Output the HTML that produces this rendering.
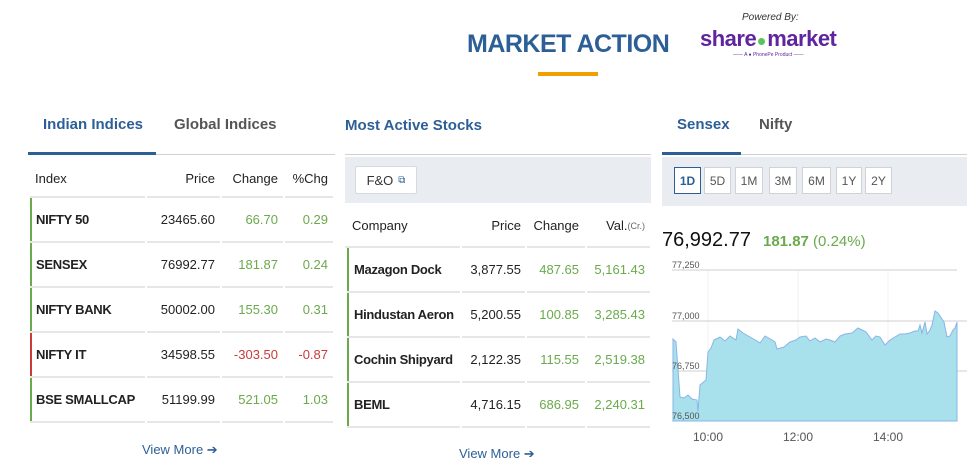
<!DOCTYPE html>
<html><head><meta charset="utf-8"><style>
*{margin:0;padding:0;box-sizing:border-box}
body{width:967px;height:475px;background:#fff;font-family:"Liberation Sans",Arial,sans-serif;position:relative;overflow:hidden;color:#222}
.a{position:absolute;white-space:nowrap}
.tab{font-size:15px;color:#555;font-weight:bold}
.tab.on{color:#2d5f97}
.line{position:absolute;height:1px;background:#d0d0d0}
.blue{position:absolute;height:3px;background:#2d5f97}
.cell{position:absolute;border-bottom:2px solid #e6e6e6;font-size:13px;display:flex;align-items:center}
.r{justify-content:flex-end}
.g{color:#6aaa4c}.red{color:#c83c3c}
.nm{font-weight:bold;color:#222;letter-spacing:-0.3px}
.bar{position:absolute;width:2px;background:#6aaa4c}
.btn{position:absolute;top:167px;height:27px;border:1px solid #cfd3d8;background:#fff;font-size:12px;color:#555;display:flex;align-items:center;justify-content:center}
.vm{font-size:13px;color:#2d5f97}
</style></head><body>

<div class="a" style="left:467px;top:30px;font-size:25px;font-weight:bold;color:#2d5f97;letter-spacing:-0.5px">MARKET ACTION</div>
<div class="a" style="left:538px;top:72px;width:60px;height:4px;background:#f0a000"></div>
<div class="a" style="left:742px;top:12px;font-size:10px;font-style:italic;color:#333">Powered By:</div>
<div class="a" style="left:700px;top:26px;font-size:22px;font-weight:bold;color:#5f259f;letter-spacing:-0.5px">share<span style="display:inline-block;width:7px;height:7px;border-radius:50%;background:#5cc25a;margin:0 2px 1px 2px"></span>market</div>
<div class="a" style="left:733px;top:52px;font-size:5px;color:#5f259f">—— A ● PhonePe Product ——</div>

<!-- LEFT -->
<div class="a tab on" style="left:43px;top:116px">Indian Indices</div>
<div class="a tab" style="left:174px;top:116px">Global Indices</div>
<div class="line" style="left:28px;top:154px;width:307px"></div>
<div class="blue" style="left:28px;top:152px;width:128px"></div>

<div class="cell" style="left:30px;top:160px;width:115px;height:38px;padding-left:5px">Index</div>
<div class="cell r" style="left:147px;top:160px;width:73px;height:38px;padding-right:5px">Price</div>
<div class="cell r" style="left:222px;top:160px;width:61px;height:38px;padding-right:5px">Change</div>
<div class="cell r" style="left:285px;top:160px;width:48px;height:38px;padding-right:5px">%Chg</div>

<div id="L"></div>
<div class="a vm" style="left:142px;top:442px">View More ➔</div>

<!-- MIDDLE -->
<div class="a" style="left:345px;top:117px;font-size:15px;font-weight:bold;color:#2d5f97">Most Active Stocks</div>
<div class="line" style="left:345px;top:154px;width:306px"></div>
<div class="a" style="left:345px;top:157px;width:306px;height:46px;background:#e9edf1"></div>
<div class="a" style="left:355px;top:166px;width:62px;height:28px;background:#fff;border:1px solid #d6d9dd;border-radius:2px;font-size:13px;color:#333;display:flex;align-items:center;justify-content:center">F&amp;O <span style="font-size:10px;margin-left:5px;color:#2d5f97">⧉</span></div>

<div class="cell" style="left:345px;top:205px;width:115px;height:43px;padding-left:7px">Company</div>
<div class="cell r" style="left:462px;top:205px;width:63px;height:43px;padding-right:4px">Price</div>
<div class="cell r" style="left:527px;top:205px;width:58px;height:43px;padding-right:6px">Change</div>
<div class="cell r" style="left:587px;top:205px;width:63px;height:43px;padding-right:5px">Val.<span style="font-size:9px;color:#666">(Cr.)</span></div>

<div id="M"></div>
<div class="a vm" style="left:459px;top:446px">View More ➔</div>

<!-- RIGHT -->
<div class="a tab on" style="left:677px;top:116px">Sensex</div>
<div class="a tab" style="left:759px;top:116px">Nifty</div>
<div class="line" style="left:662px;top:154px;width:305px"></div>
<div class="blue" style="left:662px;top:152px;width:79px"></div>
<div class="a" style="left:662px;top:157px;width:305px;height:49px;background:#e9edf1"></div>
<div class="btn" style="left:674px;width:27px;border-color:#2d5f97;color:#2d5f97;font-weight:bold">1D</div>
<div class="btn" style="left:704px;width:27px">5D</div>
<div class="btn" style="left:735px;width:28px">1M</div>
<div class="btn" style="left:769px;width:28px">3M</div>
<div class="btn" style="left:802px;width:29px">6M</div>
<div class="btn" style="left:836px;width:26px">1Y</div>
<div class="btn" style="left:865px;width:27px">2Y</div>

<div class="a" style="left:662px;top:229px;font-size:20px;color:#111">76,992.77</div>
<div class="a" style="left:763px;top:233px;font-size:15px;color:#6aaa4c"><b>181.87</b> (0.24%)</div>

<svg class="a" style="left:660px;top:255px" width="307" height="200" viewBox="660 255 307 200">
<g stroke="#f2f2f2" stroke-width="1"><line x1="708" y1="270" x2="708" y2="421"/><line x1="798" y1="270" x2="798" y2="421"/><line x1="888" y1="270" x2="888" y2="421"/></g>
<g stroke="#cfcfcf" stroke-width="1"><line x1="672" y1="270" x2="957" y2="270"/><line x1="672" y1="321" x2="967" y2="321"/><line x1="672" y1="371" x2="967" y2="371"/><line x1="672" y1="421" x2="957" y2="421"/></g>
<polygon fill="#a8e0ec" stroke="#8ab4e8" stroke-width="1" points="673,421 673,339 676,342 680,397 684,398 688,395 692,399 697,400 698,411 700,385 706,380 708,352 711,348 714,340 720,337 725,341 730,336 736,340 738,329 743,333 750,337 757,341 760,343 765,336 772,340 775,342 777,349 784,347 790,342 796,340 800,337 806,336 810,341 815,338 820,342 826,339 830,340 835,342 840,336 845,334 852,333 858,328 862,330 866,332 872,340 876,336 880,337 885,345 890,340 895,337 900,334 905,334 910,333 915,331 918,331 920,325 922,333 925,322 927,334 930,330 932,325 935,311 938,313 940,316 944,322 947,337 950,336 953,330 955,328 957,322 957,421"/>
<g font-family="Liberation Sans,sans-serif" font-size="9" fill="#555"><text x="672" y="268">77,250</text><text x="672" y="319">77,000</text><text x="672" y="369">76,750</text><text x="672" y="419">76,500</text></g>
<g font-family="Liberation Sans,sans-serif" font-size="12" fill="#555" text-anchor="middle"><text x="708" y="441">10:00</text><text x="798" y="441">12:00</text><text x="888" y="441">14:00</text></g>
</svg>

<script>
var L=[["NIFTY 50","23465.60","66.70","0.29",0],["SENSEX","76992.77","181.87","0.24",0],["NIFTY BANK","50002.00","155.30","0.31",0],["NIFTY IT","34598.55","-303.50","-0.87",1],["BSE SMALLCAP","51199.99","521.05","1.03",0]];
var h="";L.forEach(function(r,i){var t=198+i*45,c=r[4]?"red":"g",b=r[4]?"#c83c3c":"#6aaa4c";
h+='<div class="bar" style="left:30px;top:'+t+'px;height:43px;background:'+b+'"></div>';
h+='<div class="cell nm" style="left:30px;top:'+t+'px;width:115px;height:45px;padding-left:6px">'+r[0]+'</div>';
h+='<div class="cell r" style="left:147px;top:'+t+'px;width:73px;height:45px;padding-right:5px">'+r[1]+'</div>';
h+='<div class="cell r '+c+'" style="left:222px;top:'+t+'px;width:61px;height:45px;padding-right:5px">'+r[2]+'</div>';
h+='<div class="cell r '+c+'" style="left:285px;top:'+t+'px;width:48px;height:45px;padding-right:5px">'+r[3]+'</div>';});
document.getElementById("L").outerHTML=h;
var M=[["Mazagon Dock","3,877.55","487.65","5,161.43"],["Hindustan Aeron","5,200.55","100.85","3,285.43"],["Cochin Shipyard","2,122.35","115.55","2,519.38"],["BEML","4,716.15","686.95","2,240.31"]];
h="";M.forEach(function(r,i){var t=248+i*45;
h+='<div class="bar" style="left:347px;top:'+t+'px;height:43px"></div>';
h+='<div class="cell nm" style="left:347px;top:'+t+'px;width:113px;height:45px;padding-left:7px">'+r[0]+'</div>';
h+='<div class="cell r" style="left:462px;top:'+t+'px;width:63px;height:45px;padding-right:4px">'+r[1]+'</div>';
h+='<div class="cell r g" style="left:527px;top:'+t+'px;width:58px;height:45px;padding-right:6px">'+r[2]+'</div>';
h+='<div class="cell r g" style="left:587px;top:'+t+'px;width:63px;height:45px;padding-right:5px">'+r[3]+'</div>';});
document.getElementById("M").outerHTML=h;
</script>
</body></html>
